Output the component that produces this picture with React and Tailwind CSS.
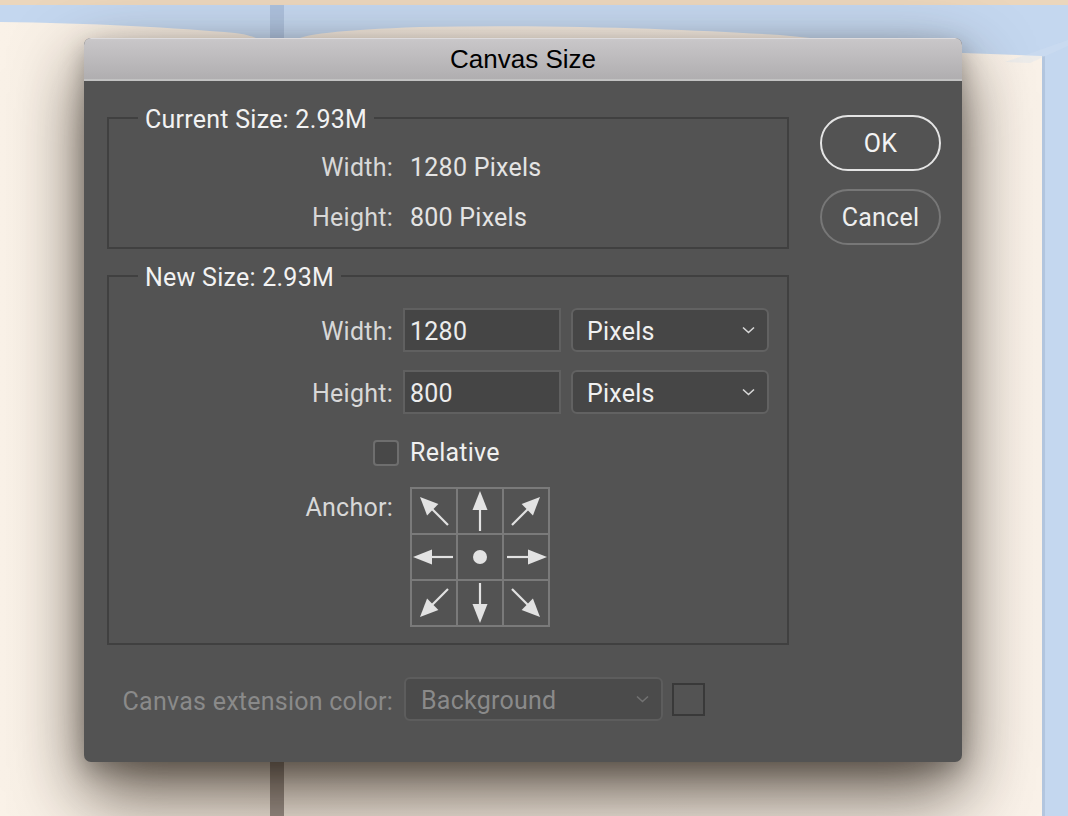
import React from 'react';

const Chevron = ({ color = '#d4d4d4' }) => (
  <svg width="13" height="8" viewBox="0 0 13 8" fill="none">
    <path d="M1 1.5 L6.5 6.5 L12 1.5" stroke={color} strokeWidth="1.6" />
  </svg>
);

const Arrow = ({ x1, y1, x2, y2, head = 19, half = 7.5 }) => {
  const dx = x2 - x1;
  const dy = y2 - y1;
  const len = Math.hypot(dx, dy);
  const ux = dx / len;
  const uy = dy / len;
  const bx = x2 - ux * head;
  const by = y2 - uy * head;
  const px = -uy * half;
  const py = ux * half;
  return (
    <g>
      <line x1={x1} y1={y1} x2={bx + ux} y2={by + uy} stroke="#e2e2e2" strokeWidth="2.2" />
      <polygon points={`${x2},${y2} ${bx + px},${by + py} ${bx - px},${by - py}`} fill="#e2e2e2" />
    </g>
  );
};

const AnchorGrid = () => (
  <svg width="140" height="140" viewBox="0 0 140 140">
    <g stroke="#7a7a7a" strokeWidth="2" fill="none">
      <rect x="1" y="1" width="138" height="138" />
      <line x1="47" y1="1" x2="47" y2="139" />
      <line x1="93" y1="1" x2="93" y2="139" />
      <line x1="1" y1="47" x2="139" y2="47" />
      <line x1="1" y1="93" x2="139" y2="93" />
    </g>
    <Arrow x1={38} y1={38} x2={10} y2={10} head={18} half={8} />
    <Arrow x1={70} y1={44} x2={70} y2={4} />
    <Arrow x1={102} y1={38} x2={130} y2={10} head={18} half={8} />
    <Arrow x1={43} y1={70} x2={3} y2={70} />
    <circle cx="70" cy="70" r="7" fill="#e2e2e2" />
    <Arrow x1={97} y1={70} x2={137} y2={70} />
    <Arrow x1={38} y1={102} x2={10} y2={130} head={18} half={8} />
    <Arrow x1={70} y1={96} x2={70} y2={136} />
    <Arrow x1={102} y1={102} x2={130} y2={130} head={18} half={8} />
  </svg>
);

// the book pages behind the dialog
const Backdrop = () => (
  <svg className="absolute inset-0" width="1068" height="816" viewBox="0 0 1068 816">
    <defs>
      <linearGradient id="pageL" x1="0" y1="0" x2="1" y2="0">
        <stop offset="0" stopColor="#faf2e8" />
        <stop offset="1" stopColor="#f4eadf" />
      </linearGradient>
      <linearGradient id="pageR" x1="0" y1="0" x2="1" y2="0">
        <stop offset="0" stopColor="#f3e9de" />
        <stop offset="1" stopColor="#faf2e9" />
      </linearGradient>
    </defs>
    <rect width="1068" height="816" fill="#c4d7ef" />
    <rect width="1068" height="5" fill="#ebd6bc" />
    <path d="M0 22 C90 23 180 28 235 33 C250 35 258 38 262 42 L270 50 L270 816 L0 816 Z" fill="url(#pageL)" />
    <rect x="270" y="5" width="14" height="811" fill="#adc1dd" />
    <rect x="270" y="740" width="14" height="76" fill="#9d928a" />
    <path d="M292 42 C300 34 340 30 420 27 C560 24 700 30 780 35 L963 53 L1042 56 L1042 816 L284 816 L284 50 Z" fill="url(#pageR)" />
    <rect x="1042" y="56" width="3" height="760" fill="#b3c6df" />
    <path d="M1005 62 L1068 40 L1068 46 L1030 63 Z" fill="#d3e1f3" opacity="0.3" />
  </svg>
);

const Field = ({ children }) => (
  <div className="h-[44px] border-2 border-[#606060] bg-[#454545] pl-[5px] pt-[3px] flex items-center text-[#ececec]">
    {children}
  </div>
);

const Select = ({ value, disabled }) => (
  <div
    className={
      disabled
        ? 'h-[44px] rounded-[6px] border-2 border-[#5d5d5d] bg-[#4b4b4b] pl-[15px] pr-[12px] flex items-center justify-between text-[#8a8a8a]'
        : 'h-[44px] rounded-[6px] border-2 border-[#626262] bg-[#464646] pl-[14px] pr-[12px] flex items-center justify-between text-[#f0f0f0]'
    }
  >
    <span className="pt-[4px]">{value}</span>
    <Chevron color={disabled ? '#727272' : '#d8d8d8'} />
  </div>
);

export default function App() {
  return (
    <div className="relative w-[1068px] h-[816px] overflow-hidden font-['Roboto','Noto_Sans',sans-serif]">
      <Backdrop />
      <div className="relative pt-[38px] pl-[84px]">
        <div className="w-[878px] h-[724px] rounded-[7px] bg-[#535353] shadow-[0_30px_70px_rgba(30,20,10,0.7),0_8px_24px_rgba(0,0,0,0.25)] flex flex-col overflow-hidden">
          <div className="h-[43px] shrink-0 bg-gradient-to-b from-[#c9c7c9] to-[#b0aeb0] border-t border-[#dddbdd] border-b-2 border-b-[#c2c2c2] flex items-center justify-center">
            <span className="font-['Liberation_Sans',Arial,sans-serif] text-[26px] text-black leading-none">Canvas Size</span>
          </div>

          <div className="flex text-[25px] tracking-[0.25px] leading-[28px]">
            <div className="ml-[23px] w-[682px]">
              <fieldset className="mt-[21px] border-2 border-[#404040] px-0 pt-[9px] pb-[4px]">
                <legend className="ml-[29px] px-[7px] pt-[4px] text-[#f2f2f2]">Current Size: 2.93M</legend>
                <div className="h-[50px] flex items-center">
                  <span className="w-[284px] text-right text-[#d8d8d8]">Width:</span>
                  <span className="ml-[17px] text-[#e4e4e4]">1280 Pixels</span>
                </div>
                <div className="h-[50px] flex items-center">
                  <span className="w-[284px] text-right text-[#d8d8d8]">Height:</span>
                  <span className="ml-[17px] text-[#e4e4e4]">800 Pixels</span>
                </div>
              </fieldset>

              <fieldset className="mt-[11px] border-2 border-[#404040] px-0 pt-[16px] pb-[16px]">
                <legend className="ml-[29px] px-[7px] pt-[4px] text-[#f2f2f2]">New Size: 2.93M</legend>
                <div className="flex items-center gap-[10px]">
                  <span className="w-[284px] pt-[3px] text-right text-[#d8d8d8]">Width:</span>
                  <div className="w-[158px]"><Field>1280</Field></div>
                  <div className="w-[198px]"><Select value="Pixels" /></div>
                </div>
                <div className="mt-[18px] flex items-center gap-[10px]">
                  <span className="w-[284px] pt-[3px] text-right text-[#d8d8d8]">Height:</span>
                  <div className="w-[158px]"><Field>800</Field></div>
                  <div className="w-[198px]"><Select value="Pixels" /></div>
                </div>
                <div className="mt-[26px] h-[26px] flex items-center">
                  <div className="ml-[264px] w-[26px] h-[26px] rounded-[4px] border-2 border-[#6e6e6e] bg-[#484848]" />
                  <span className="ml-[11px] text-[#f0f0f0]">Relative</span>
                </div>
                <div className="mt-[21px] flex items-start">
                  <span className="w-[284px] mt-[7px] text-right text-[#d8d8d8]">Anchor:</span>
                  <div className="ml-[17px]"><AnchorGrid /></div>
                </div>
              </fieldset>

              <div className="mt-[32px] flex items-center">
                <span className="w-[286px] pt-[5px] text-right text-[#8a8a8a]">Canvas extension color:</span>
                <div className="ml-[11px] w-[259px]"><Select value="Background" disabled /></div>
                <div className="ml-[9px] w-[33px] h-[33px] border-2 border-[#393939]" />
              </div>
            </div>

            <div className="ml-[31px] w-[121px] mt-[34px] flex flex-col gap-[18px]">
              <button className="h-[56px] pt-[2px] rounded-full border-2 border-[#e4e4e4] text-[#f4f4f4]">OK</button>
              <button className="h-[56px] pt-[2px] rounded-full border-2 border-[#777777] text-[#eeeeee]">Cancel</button>
            </div>
          </div>
        </div>
      </div>
    </div>
  );
}
